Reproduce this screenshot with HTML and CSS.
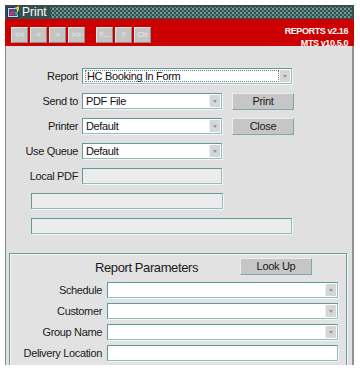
FILE: index.html
```html
<!DOCTYPE html>
<html>
<head>
<meta charset="utf-8">
<link rel="stylesheet" href="styles.css">
</head>
<body>
<div class="window">
  <div class="titlebar">
    <svg class="appicon" width="13" height="12" viewBox="0 0 13 12">
      <rect x="0.5" y="1.5" width="11" height="10" fill="#d8d8e8" stroke="#203060"/>
      <rect x="2" y="3" width="8" height="7" fill="#3050c0"/>
      <rect x="3" y="5" width="4" height="4" fill="#e03030"/>
      <path d="M7 2 L12 0 L12 5 Z" fill="#f0c020"/>
      <rect x="8" y="6" width="3" height="3" fill="#40b040"/>
    </svg>
    <span class="title">Print</span>
    <div class="dots"></div>
  </div>
  <div class="toolbar">
    <div class="tools">
      <button class="tb">&lt;&lt;</button>
      <button class="tb">&lt;</button>
      <button class="tb">&gt;</button>
      <button class="tb">&gt;&gt;</button>
      <button class="tb sep">?...</button>
      <button class="tb">?</button>
      <button class="tb">Clr</button>
    </div>
    <div class="version">
      <div>REPORTS v2.16</div>
      <div>MTS v10.5.0</div>
    </div>
  </div>
  <div class="body">
    <div class="row">
      <label class="lbl">Report</label>
      <div class="field w-report"><span class="focus">HC Booking In Form</span><span class="drop"></span></div>
    </div>
    <div class="row">
      <label class="lbl">Send to</label>
      <div class="field w-mid"><span class="txt">PDF File</span><span class="drop"></span></div>
      <button class="btn">Print</button>
    </div>
    <div class="row">
      <label class="lbl">Printer</label>
      <div class="field w-mid"><span class="txt">Default</span><span class="drop"></span></div>
      <button class="btn">Close</button>
    </div>
    <div class="row">
      <label class="lbl">Use Queue</label>
      <div class="field w-mid"><span class="txt">Default</span><span class="drop"></span></div>
    </div>
    <div class="row">
      <label class="lbl">Local PDF</label>
      <div class="field w-mid disabled"></div>
    </div>
    <div class="row">
      <div class="field disabled w-blank1"></div>
    </div>
    <div class="row last">
      <div class="field disabled w-blank2"></div>
    </div>

    <div class="panel">
      <div class="panel-head">
        <span class="panel-title">Report Parameters</span>
        <button class="btn lookup">Look Up</button>
      </div>
      <div class="prow">
        <label class="plbl">Schedule</label>
        <div class="field w-param"><span class="drop"></span></div>
      </div>
      <div class="prow">
        <label class="plbl">Customer</label>
        <div class="field w-param"><span class="drop"></span></div>
      </div>
      <div class="prow">
        <label class="plbl">Group Name</label>
        <div class="field w-param"><span class="drop"></span></div>
      </div>
      <div class="prow">
        <label class="plbl">Delivery Location</label>
        <div class="field w-param"></div>
      </div>
    </div>
  </div>
</div>
</body>
</html>
```

FILE: styles.css
```css
html, body {
  margin: 0;
  padding: 0;
  background: #ffffff;
}
body {
  font-family: "Liberation Sans", Arial, sans-serif;
  width: 360px;
  height: 372px;
  overflow: hidden;
}
.window {
  margin: 5px 0 0 5px;
  width: 349px;
}
.titlebar {
  height: 14px;
  background-color: #34504e;
  display: flex;
  align-items: center;
  padding-left: 2px;
}
.appicon {
  flex: none;
}
.title {
  color: #ffffff;
  font-size: 12px;
  line-height: 13px;
  margin-left: 2px;
  margin-right: 4px;
}
.dots {
  flex: 1;
  height: 11px;
  margin-right: 2px;
  background-image:
    radial-gradient(circle, #729f9b 0.8px, transparent 1.1px),
    radial-gradient(circle, #5c8a86 0.8px, transparent 1.1px);
  background-size: 4px 4px, 4px 4px;
  background-position: 0 0, 2px 2px;
}
.toolbar {
  height: 27px;
  background: #cc0000;
  display: flex;
  justify-content: space-between;
  box-sizing: border-box;
  padding: 8px 6px 0 6px;
}
.tools {
  display: flex;
  gap: 2px;
  align-items: flex-start;
}
.tb {
  width: 17px;
  height: 16px;
  padding: 0;
  margin: 0;
  background: #c4c4c4;
  border: 1px solid;
  border-color: #e6e6e6 #8e8e8e #8e8e8e #e6e6e6;
  color: #e2e2e2;
  font-family: "Liberation Sans", Arial, sans-serif;
  font-size: 8px;
  font-weight: bold;
  line-height: 14px;
  text-align: center;
}
.tb.sep {
  margin-left: 9px;
}
.version {
  color: #ffffff;
  font-weight: bold;
  font-size: 9px;
  letter-spacing: -0.4px;
  line-height: 12px;
  text-align: right;
  margin-top: -2px;
}
.body {
  height: 319px;
  background: #e0e0e0;
  border-left: 1px solid #7d8e8e;
  border-right: 2px solid #8e9292;
  box-sizing: border-box;
  padding-top: 22px;
  overflow: hidden;
}
.row {
  display: flex;
  align-items: center;
  height: 16px;
  margin-bottom: 9px;
}
.row.last {
  margin-bottom: 0;
}
.lbl {
  width: 72px;
  margin-right: 4px;
  text-align: right;
  font-size: 11px;
  letter-spacing: -0.35px;
  color: #1a1a1a;
}
.field {
  position: relative;
  height: 16px;
  box-sizing: border-box;
  background: #ffffff;
  border: 1px solid;
  border-color: #5f9a9a #8cc0c0 #8cc0c0 #5f9a9a;
  box-shadow: 1px 1px 0 #f6f6f6;
  display: flex;
  align-items: center;
  font-size: 11px;
  letter-spacing: -0.35px;
  color: #111;
}
.field.disabled {
  background: #ececec;
}
.txt {
  padding-left: 3px;
}
.focus {
  margin-left: 2px;
  padding: 0 1px;
  height: 12px;
  line-height: 11px;
  border: 1px dotted #777;
  width: 194px;
  box-sizing: border-box;
}
.drop {
  position: absolute;
  right: 1px;
  top: 1px;
  bottom: 1px;
  width: 10px;
  background: #d6d6d6;
  border-left: 1px solid #eeeeee;
}
.drop::after {
  content: "";
  position: absolute;
  left: 3px;
  top: 5px;
  border-left: 2.5px solid transparent;
  border-right: 2.5px solid transparent;
  border-top: 3px solid #7fa2a2;
}
.w-report { width: 210px; }
.w-mid { width: 140px; }
.w-blank1 { width: 192px; margin-left: 25px; }
.w-blank2 { width: 261px; margin-left: 25px; }
.w-param { width: 231px; }
.btn {
  height: 17px;
  width: 62px;
  margin: 0 0 0 10px;
  padding: 0;
  background: #c6c6c6;
  border: 1px solid;
  border-color: #ececec #7fa8a8 #7fa8a8 #ececec;
  font-family: "Liberation Sans", Arial, sans-serif;
  font-size: 11px;
  letter-spacing: -0.3px;
  color: #1a1a1a;
  line-height: 15px;
  text-align: center;
}
.panel {
  margin: 19px 0 0 3px;
  width: 338px;
  height: 140px;
  box-sizing: border-box;
  border: 1px solid #6a9e9e;
  box-shadow: inset 1px 1px 0 #f4f4f4, 1px 1px 0 #f4f4f4;
  background: #e2e2e2;
  padding-top: 4px;
}
.panel-head {
  display: flex;
  align-items: center;
  height: 17px;
  padding-left: 85px;
}
.panel-title {
  font-size: 13px;
  letter-spacing: -0.4px;
  color: #1a1a1a;
  width: 145px;
  padding-top: 1px;
}
.lookup {
  margin-left: 0;
  width: 72px;
}
.prow {
  display: flex;
  align-items: center;
  height: 16px;
  margin-top: 5px;
}
.panel-head + .prow {
  margin-top: 7px;
}
.plbl {
  width: 92px;
  margin-right: 5px;
  text-align: right;
  font-size: 11px;
  letter-spacing: -0.35px;
  color: #1a1a1a;
}
```
